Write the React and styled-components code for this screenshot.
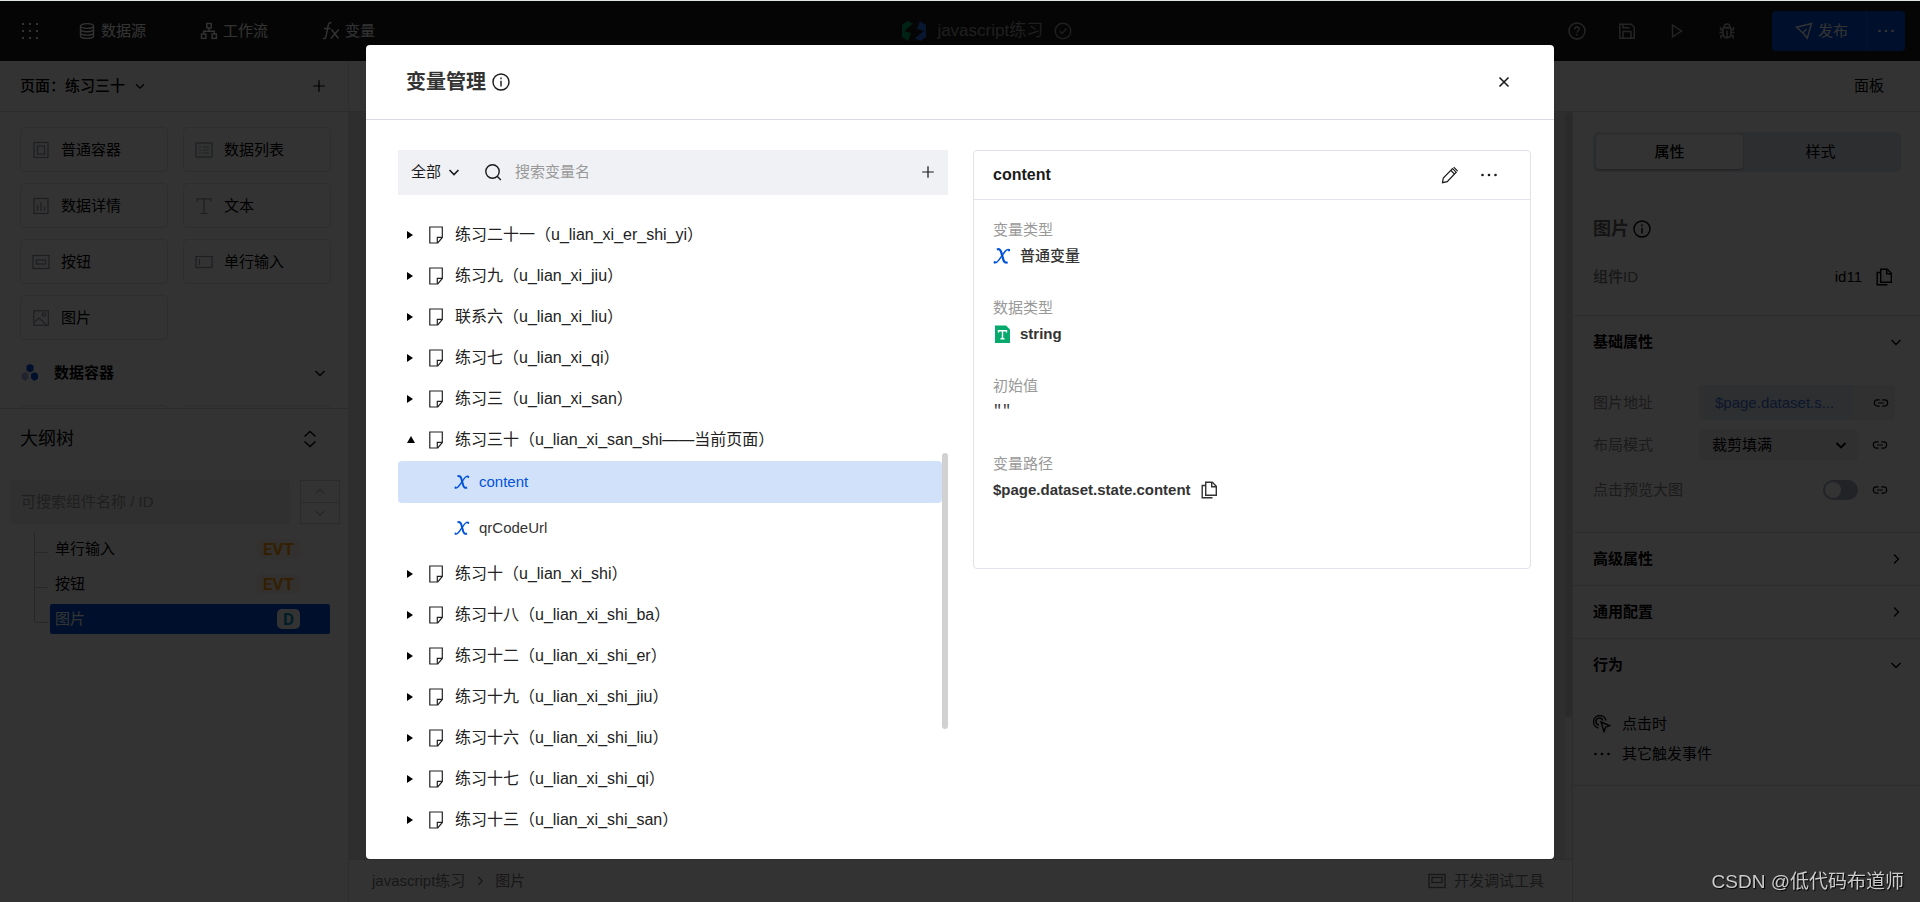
// ------------------------ React
import React, { useState } from 'react'


// ------------------------ Styled-Components
import styled, { createGlobalStyle, css } from 'styled-components';


const GlobalStyle = createGlobalStyle`
  * { box-sizing: border-box; }
  body {
    margin: 0;
    font-family: "Liberation Sans", "Noto Sans CJK SC", sans-serif;
    font-size: 15px;
    line-height: 22px;
    color: #000;
    overflow: hidden;
  }
  button, input, select {
    font: inherit;
    color: inherit;
    border: none;
    outline: none;
    background: none;
    padding: 0;
    margin: 0;
  }
  button { cursor: pointer; }
  ul { list-style: none; margin: 0; padding: 0; }
  h1, h2, h3, p, dl, dd { margin: 0; }
  a { color: inherit; text-decoration: none; }
`

// ------------------------ Icons
const Svg = styled.svg`
  display: block;
  flex: none;
  width: ${(props) => props.$size || 18}px;
  height: ${(props) => props.$size || 18}px;
  fill: none;
  stroke: currentColor;
  stroke-width: ${(props) => props.$line || 1.4};
`

const BlueSvg = styled(Svg)`
  color: #0052d9;
`

const ICONS = {
  grid: (
    <g fill="currentColor" stroke="none">
      {[2, 9, 16].map((y) => [2, 9, 16].map((x) => <rect key={x + '-' + y} x={x - 1} y={y - 1} width="2" height="2" />))}
    </g>
  ),
  database: <><ellipse cx="9" cy="4" rx="6.5" ry="2.4" /><path d="M2.5 4v10c0 1.4 2.900 2.400 6.500 2.400s6.500-1 6.500-2.400V4M2.500 7.300c0 1.400 2.900 2.400 6.500 2.400s6.500-1 6.500-2.400M2.500 10.700c0 1.400 2.900 2.400 6.500 2.400s6.500-1 6.500-2.400" /></>,
  flow: <><rect x="6.800" y="1.500" width="4.400" height="4.400" /><rect x="1.500" y="12" width="4.400" height="4.400" /><rect x="12" y="12" width="4.400" height="4.400" /><path d="M9 6v3.200M3.700 12V9.200h10.600V12" /></>,
  fx: <path d="M9.500 1.200C8 .200 6.700 .900 6.300 2.900L4 14.500c-.4 2-1.500 2.700-3 1.700M2 6.500h6.500M9.500 7.500l7 9M16.800 7.500L8.800 16.500" />,
  check: <><circle cx="9" cy="9" r="7.800" /><path d="M5.800 9.200l2.400 2.300 4.200-5" /></>,
  help: <><circle cx="9" cy="9" r="8" /><path d="M6.700 7.300c0-1.400 1-2.300 2.300-2.300s2.300.9 2.300 2.100c0 1.700-2.300 1.700-2.300 3.700M9 12v1.500" /></>,
  save: <><path d="M1.800 2.200h11.500l3 3v11H1.800z" /><path d="M5 2.200v3.600h6.500M5 16V9.500h8V16" /></>,
  play: <path d="M4.500 3l9 6-9 6z" />,
  bug: <><path d="M6 5.500C6 3.300 7.300 2 9 2s3 1.300 3 3.500zM5 6h8v5.500c0 2.600-1.700 4.300-4 4.300s-4-1.700-4-4.300zM9 8.500v7M5 8.500L2.500 7.500V5M13 8.500l2.500-1V5M5 10.500H1.500M13 10.500h3.500M5.300 13l-2.500 1v2.500M12.700 13l2.500 1v2.500" /></>,
  send: <><path d="M1.500 5.200L16.500 1.500 12.300 16.300 8 11z" /><path d="M8 11l3.500-4" /></>,
  more: <g fill="currentColor" stroke="none"><circle cx="2.500" cy="9" r="1.300" /><circle cx="9" cy="9" r="1.300" /><circle cx="15.500" cy="9" r="1.300" /></g>,
  down: <path d="M4.500 7l4.500 4.500L13.500 7" />,
  up: <path d="M4.500 11.500L9 7l4.500 4.500" />,
  right: <path d="M7 4.500L11.500 9 7 13.500" />,
  plus: <path d="M9 2.500v13M2.500 9h13" />,
  close: <path d="M4.500 4.500l9 9M13.500 4.500l-9 9" />,
  info: <><circle cx="9" cy="9" r="8" /><path d="M9 7.700v5.800M9 4.600v1.700" /></>,
  search: <><circle cx="8.500" cy="8.500" r="6.700" /><path d="M13.200 13.200l3.600 3.700" /></>,
  updown: <path d="M3.500 6.500L9 1.500l5.500 5M3.500 11.500L9 16.500l5.500-5" />,
  page: <><path d="M2.800 1h12.500v10.500l-4.500 5.500H2.800z" /><path d="M10.300 17V11.300h5" /></>,
  copy: <><path d="M5.700 1.200h6.600l4 4v9H5.700z" /><path d="M11.700 1.500v4.300H16M5.500 4.500H2.200V16.800H12.500" /></>,
  pencil: <><path d="M1.500 16.700l.8-4.700L11.500 2.500l3.700 3.700L6.200 15.600z" /><path d="M10 4.500l3.500 3.600M12.700 1.200l4 4" /></>,
  link: <path d="M7.500 5.500H4.700a3.200 3.500 0 0 0 0 7h2.800M10.500 5.500h2.800a3.200 3.500 0 0 1 0 7h-2.800M5.800 9h6.400" />,
  container: <><rect x="2" y="1.500" width="14" height="15" /><rect x="5.500" y="5" width="7" height="8" /></>,
  list: <><rect x="1" y="2" width="16" height="14" /><path d="M4 6h2M7.500 6H14M4 9h2M7.500 9H14M4 12h2M7.500 12H14" /></>,
  detail: <><rect x="2" y="1.500" width="14" height="15" /><path d="M5.500 8v6M9 5v9M12.500 10v4" /></>,
  text: <path d="M2 4.500V1.800h14v2.700M9 1.800v14.700M5.500 16.500h7" />,
  button: <><rect x="1" y="2.500" width="16" height="13" /><rect x="4.500" y="7" width="9" height="4" /></>,
  input: <><rect x="1" y="3.500" width="16" height="11" /><path d="M4.500 6v6" /></>,
  image: <><rect x="1.800" y="1.800" width="14.500" height="14.500" /><circle cx="12" cy="5.500" r="1.700" /><path d="M2 13.500l5-4.500 7.500 7" /></>,
  tool: <><rect x="1" y="2.500" width="16" height="13" /><rect x="4" y="5.500" width="10" height="5" /></>,
  click: <><path d="M8 7l8.500 3.700-3.800 1.500-1.700 4.300z" /><path d="M5.500 13A6.300 6.300 0 1 1 13 5.500M6 10A3.500 3.500 0 1 1 9.800 5.500" /></>,
}

function Icon({ name, size, line }) {
  return <Svg viewBox="0 0 18 18" $size={size} $line={line} aria-hidden="true">{ICONS[name]}</Svg>
}

function VarIcon({ size = 16 }) {
  return (
    <BlueSvg viewBox="0 0 16 16" $size={size} aria-hidden="true">
      <path d="M3.500 2.300c2-.9 3.200.2 3.800 2.300l1.800 6.400c.6 2.300 1.900 3.400 3.900 2.500" strokeWidth="2" />
      <path d="M14.900 2.800c-1.300-1.100-2.900-.5-4.400 1.400L5.300 11.500c-1.500 2.100-3 3.200-4.500 2.200" strokeWidth="1.300" />
      <circle cx="14.200" cy="2.900" r="1" fill="currentColor" stroke="none" />
      <circle cx="1.600" cy="13.500" r="1" fill="currentColor" stroke="none" />
    </BlueSvg>
  )
}

function StringIcon() {
  return (
    <Svg viewBox="0 0 18 18" $size={18} aria-hidden="true">
      <path d="M2 .5h11l4 4V18H2z" fill="#07aa6c" stroke="none" />
      <path d="M5.500 7.500V5.700h8v1.800M9.500 5.700v8M7.500 13.700h4" stroke="#fff" />
    </Svg>
  )
}

// ------------------------ Page frame
const Page = styled.div`
  display: flex;
  flex-direction: column;
  height: 100vh;
  border-top: 1px solid #dfe5e2;
  background-color: #fff;
`

const TopBar = styled.header`
  flex: none;
  display: grid;
  grid-template-columns: 47vw 1fr auto;
  align-items: center;
  height: 60px;
  padding-right: 15px;
  background-color: #1a1a1a;
  color: #fff;
`

const TopNav = styled.nav`
  display: flex;
  align-items: center;
  padding-left: 21px;
  a {
    display: flex;
    align-items: center;
    gap: 5px;
    margin-left: 54px;
  }
  a:first-of-type { margin-left: 39px; }
`

const AppTitle = styled.div`
  display: flex;
  align-items: center;
  gap: 11px;
  font-size: 17px;
  color: #999;
`

const TopActions = styled.div`
  display: flex;
  align-items: center;
  gap: 32px;
  color: #bbb;
`

const Publish = styled.div`
  display: flex;
  height: 40px;
  margin-left: 4px;
  border-radius: 4px;
  overflow: hidden;
  background-color: #0052d9;
  color: #fff;
  button {
    display: flex;
    align-items: center;
    gap: 5px;
    padding: 0 18px 0 23px;
  }
  button + button {
    padding: 0 10px;
    border-left: 1px solid #1a66e0;
  }
`

const SubBar = styled.div`
  flex: none;
  display: flex;
  height: 51px;
  border-bottom: 1px solid #dcdcdc;
`

const PageSwitch = styled.div`
  display: flex;
  align-items: center;
  justify-content: space-between;
  width: 349px;
  padding: 0 21px 0 20px;
  border-right: 1px solid #e6e6e6;
  font-weight: 500;
  button {
    display: flex;
    align-items: center;
    gap: 7px;
  }
`

const PanelLink = styled.a`
  margin: auto 36px auto auto;
`

const Body = styled.div`
  flex: 1;
  display: flex;
  min-height: 0;
`

// ------------------------ Left sidebar
const Sidebar = styled.aside`
  flex: none;
  width: 349px;
  border-right: 1px solid #e6e6e6;
`

const Components = styled.section`
  height: 296px;
  overflow: hidden;
  padding: 15px 17px 0 20px;
`

const CardGrid = styled.div`
  display: grid;
  grid-template-columns: 1fr 1fr;
  gap: 11px 15px;
`

const Card = styled.button`
  display: flex;
  align-items: center;
  gap: 11px;
  height: 45px;
  padding-left: 11px;
  border: 1px solid #e3e4e8;
  border-radius: 4px;
  svg { color: #8c95a5; }
`

const Category = styled.button`
  display: flex;
  align-items: center;
  width: 100%;
  height: 65px;
  padding-right: 2px;
  font-weight: 700;
  span {
    flex: 1;
    margin-left: 15px;
    text-align: left;
  }
`

const Outline = styled.section`
  border-top: 1px solid #d8d8d8;
`

const OutlineHead = styled.div`
  display: flex;
  align-items: center;
  justify-content: space-between;
  height: 60px;
  padding: 0 29px 0 20px;
  h2 {
    font-size: 18px;
    font-weight: 400;
  }
`

const OutlineSearch = styled.div`
  display: flex;
  gap: 10px;
  height: 44px;
  margin: 11px 8px 8px 10px;
  input {
    flex: 1;
    min-width: 0;
    padding: 0 11px;
    border-radius: 4px;
    background-color: #f0f0f0;
    &::placeholder { color: #999; }
  }
`

const Stepper = styled.div`
  display: flex;
  flex-direction: column;
  width: 40px;
  border: 1px solid #d5d5d5;
  color: #bbb;
  button {
    flex: 1;
    display: flex;
    align-items: center;
    justify-content: center;
  }
  button + button { border-top: 1px solid #d5d5d5; }
`

const TreeItem = styled.li`
  display: flex;
  height: 35px;
  padding: 0 18px 0 34px;
`

const Branch = styled.span`
  width: 14px;
  height: ${(props) => props.$last ? 20 : 35}px;
  margin-right: 2px;
  border-left: 1px solid #c8c8c8;
  &::before {
    content: '';
    display: block;
    height: 20px;
    border-bottom: 1px solid #c8c8c8;
  }
`

const TreeNode = styled.button`
  flex: 1;
  display: flex;
  align-items: center;
  justify-content: space-between;
  height: 30px;
  margin-top: 2px;
  padding: 0 30px 0 5px;
  border-radius: 2px;
  ${(props) => props.$active && css`
    background-color: #0052d9;
    color: #fff;
  `}
`

const Badge = styled.span`
  padding: 0 6px;
  border-radius: 5px;
  font-family: Roboto, sans-serif;
  font-size: 17px;
  line-height: 20px;
  font-weight: 700;
  background-color: ${(props) => props.$kind === 'D' ? '#fff' : '#fff4e8'};
  color: ${(props) => props.$kind === 'D' ? '#0594c0' : '#ffa011'};
`

// ------------------------ Center
const Center = styled.main`
  flex: 1;
  display: flex;
  flex-direction: column;
`

const Canvas = styled.div`
  flex: 1;
  display: flex;
  justify-content: flex-end;
  background-color: #e4e4e6;
`

const CanvasRail = styled.div`
  width: 7px;
  background-color: #f4f4f4;
  &::before {
    content: '';
    display: block;
    height: 81%;
    border-radius: 4px;
    background-color: #d0d0d0;
  }
`

const Footer = styled.footer`
  display: flex;
  align-items: center;
  justify-content: space-between;
  height: 43px;
  padding: 0 28px 0 23px;
  border-top: 1px solid #dcdcdc;
  color: #777;
  nav, button {
    display: flex;
    align-items: center;
    gap: 7px;
  }
  button { gap: 8px; }
`

// ------------------------ Right panel
const Panel = styled.aside`
  flex: none;
  width: 348px;
  border-left: 1px solid #dcdcdc;
`

const Tabs = styled.div`
  display: flex;
  height: 40px;
  margin: 20px 19px 39px 20px;
  padding: 3px;
  border-radius: 6px;
  background-color: #dce4ef;
`

const Tab = styled.button`
  flex: ${(props) => props.$active ? 147 : 155};
  border-radius: 4px;
  ${(props) => props.$active && css`
    background-color: #fff;
    box-shadow: 0 1px 2px rgba(0, 0, 0, 0.3);
    font-weight: 500;
  `}
`

const PanelTitle = styled.h2`
  display: flex;
  align-items: center;
  gap: 4px;
  height: 36px;
  margin: 0 20px 12px;
  font-size: 18px;
  font-weight: 700;
  span { color: #666; }
`

const IdRow = styled.div`
  display: flex;
  align-items: center;
  height: 36px;
  margin: 0 27px 20px 20px;
  span {
    flex: 1;
    font-weight: 500;
    color: #777;
  }
  button { margin-left: 13px; }
`

const Section = styled.section`
  padding: 0 25px ${(props) => props.$bottom || 0}px 20px;
  border-top: 1px solid #dcdcdc;
`

const SectionHead = styled.h3`
  display: flex;
  align-items: center;
  justify-content: space-between;
  height: 52px;
  margin-right: -10px;
  font-size: 15px;
  font-weight: 700;
`

const Prop = styled.div`
  display: grid;
  grid-template-columns: 106px minmax(0, 1fr);
  align-items: center;
  margin-top: ${(props) => props.$top}px;
  label { color: #888; }
`

const Control = styled.div`
  display: flex;
  align-items: center;
  justify-content: flex-end;
  height: 30px;
`

const Binding = styled(Control)`
  height: 35px;
  padding: 0 6px;
  border-radius: 4px;
  background-color: #f0f0f0;
  input {
    flex: 1;
    min-width: 0;
    align-self: stretch;
    padding: 0 10px;
    background-color: #e3e8f5;
    color: #3d73d9;
  }
  button { margin-left: 20px; }
`

const SelectBox = styled.div`
  flex: 1;
  display: flex;
  align-items: center;
  height: 30px;
  padding: 0 8px 0 13px;
  border-radius: 4px;
  background-color: #f0f0f0;
  select {
    flex: 1;
    appearance: none;
  }
`

const LinkButton = styled.button`
  padding: 0 7px 0 14px;
`

const Toggle = styled.input`
  appearance: none;
  display: flex;
  align-items: center;
  width: 35px;
  height: 20px;
  border-radius: 10px;
  background-color: #a5adbd;
  &::before {
    content: '';
    width: 16px;
    height: 16px;
    margin-left: 2px;
    border-radius: 50%;
    background-color: #fff;
  }
`

const EventRow = styled.button`
  display: flex;
  align-items: center;
  gap: 11px;
  height: 30px;
  white-space: nowrap;
`

// ------------------------ Dialog
const Overlay = styled.div`
  position: fixed;
  inset: 1px 0 0 0;
  display: flex;
  padding: 44px 19% 43px;
  justify-content: center;
  background-color: rgba(0, 0, 0, 0.8);
`

const Dialog = styled.section`
  display: flex;
  flex-direction: column;
  width: 100%;
  max-width: 1188px;
  border-radius: 4px;
  background-color: #fff;
  color: #1a1a1a;
`

const DialogHead = styled.header`
  display: flex;
  align-items: center;
  height: 75px;
  padding: 0 41px 0 40px;
  border-bottom: 1px solid #d7dae2;
  h1 {
    margin-right: 6px;
    font-size: 20px;
    line-height: 28px;
    font-weight: 700;
    color: #333;
  }
  button { margin-left: auto; }
`

const DialogBody = styled.div`
  flex: 1;
  min-height: 0;
  display: grid;
  grid-template-columns: 550fr 558fr;
  gap: 25px;
  align-items: start;
  padding: 30px 23px 0 32px;
`

const SearchBar = styled.div`
  display: flex;
  align-items: center;
  height: 45px;
  padding: 0 12px 2px 13px;
  background-color: #f0f1f5;
  select {
    appearance: none;
    margin-right: 3px;
  }
  input {
    flex: 1;
    min-width: 0;
    margin-left: 13px;
    &::placeholder { color: #999; }
  }
`

const FilterBox = styled.div`
  display: flex;
  align-items: center;
  margin-right: 21px;
`

const ListArea = styled.div`
  display: flex;
  margin-top: 19px;
`

const VarTree = styled.ul`
  flex: 1;
`

const PageRow = styled.button`
  display: flex;
  align-items: center;
  width: 100%;
  height: 41px;
  padding-left: 9px;
  font-size: 16px;
  color: #222;
  text-align: left;
  svg { margin-right: 10px; }
`

const Caret = styled.span`
  display: flex;
  width: 20px;
  &::before {
    content: '';
    border: 4px solid transparent;
    ${(props) => props.$open ? css`
      border-top: none;
      border-bottom: 7px solid #000;
    ` : css`
      border-right: none;
      border-left: 6px solid #000;
    `}
  }
`

const VarList = styled.div`
  padding-top: 1px;
`

const VarRow = styled.button`
  display: flex;
  align-items: center;
  gap: 9px;
  width: 100%;
  height: 42px;
  margin-bottom: 4px;
  padding-left: 56px;
  border-radius: 4px;
  background-color: ${(props) => props.$active ? '#d2e1fa' : 'transparent'};
  color: ${(props) => props.$active ? '#0052d9' : '#333'};
`

const ListRail = styled.div`
  width: 6px;
  padding-top: 239px;
  &::before {
    content: '';
    display: block;
    height: 276px;
    border-radius: 3px;
    background-color: #d1d1d1;
  }
`

const Detail = styled.article`
  border: 1px solid #e0e3ea;
  border-radius: 4px;
  header {
    display: flex;
    align-items: center;
    gap: 21px;
    height: 49px;
    padding: 0 32px 0 19px;
    border-bottom: 1px solid #e0e3ea;
  }
  h2 {
    flex: 1;
    font-size: 16px;
    font-weight: 700;
  }
  dl {
    height: 368px;
    padding: 19px;
  }
`

const Field = styled.div`
  margin-bottom: 26px;
  dt { color: #999; }
  dd {
    display: flex;
    align-items: center;
    gap: 9px;
    height: 30px;
    color: #333;
    font-weight: ${(props) => props.$weight || 700};
    font-family: ${(props) => props.$mono ? '"Liberation Mono", monospace' : 'inherit'};
  }
`

const Watermark = styled.p`
  position: fixed;
  right: 16px;
  bottom: 6px;
  font-size: 19px;
  line-height: 28px;
  color: #ccc;
  text-shadow: 1px 1px 1px #000;
`


const components = [
  { icon: 'container', name: '普通容器' },
  { icon: 'list', name: '数据列表' },
  { icon: 'detail', name: '数据详情' },
  { icon: 'text', name: '文本' },
  { icon: 'button', name: '按钮' },
  { icon: 'input', name: '单行输入' },
  { icon: 'image', name: '图片' },
]

const outline = [
  { name: '单行输入', badge: 'EVT' },
  { name: '按钮', badge: 'EVT' },
  { name: '图片', badge: 'D' },
]

const pages = [
  { title: '练习二十一（u_lian_xi_er_shi_yi）' },
  { title: '练习九（u_lian_xi_jiu）' },
  { title: '联系六（u_lian_xi_liu）' },
  { title: '练习七（u_lian_xi_qi）' },
  { title: '练习三（u_lian_xi_san）' },
  { title: '练习三十（u_lian_xi_san_shi——当前页面）', vars: ['content', 'qrCodeUrl'] },
  { title: '练习十（u_lian_xi_shi）' },
  { title: '练习十八（u_lian_xi_shi_ba）' },
  { title: '练习十二（u_lian_xi_shi_er）' },
  { title: '练习十九（u_lian_xi_shi_jiu）' },
  { title: '练习十六（u_lian_xi_shi_liu）' },
  { title: '练习十七（u_lian_xi_shi_qi）' },
  { title: '练习十三（u_lian_xi_shi_san）' },
]


function Header() {
  return (
    <TopBar>
      <TopNav>
        <button aria-label='菜单'><Icon name='grid' /></button>
        <a href='#data'><Icon name='database' />数据源</a>
        <a href='#flow'><Icon name='flow' />工作流</a>
        <a href='#vars'><Icon name='fx' />变量</a>
      </TopNav>
      <AppTitle>
        <svg width='24' height='20' viewBox='0 0 24 20' aria-hidden='true'>
          <path d='M0 4L5.500 0 11 2.500 2.500 10 9 12 6 20 0 16z' fill='#00a86b' />
          <path d='M24 16l-5.500 4-5.500-2.500L21.500 10 15 8l3-8 6 4z' fill='#2b6de8' />
          <path d='M2.500 10L11 7v5.500zM21.500 10L13 13V7.500z' fill='#1a1a1a' />
        </svg>
        <span>javascript练习</span>
        <Icon name='check' />
      </AppTitle>
      <TopActions>
        <button aria-label='帮助'><Icon name='help' /></button>
        <button aria-label='保存'><Icon name='save' /></button>
        <button aria-label='预览'><Icon name='play' /></button>
        <button aria-label='调试'><Icon name='bug' /></button>
        <Publish>
          <button><Icon name='send' />发布</button>
          <button aria-label='更多发布选项'><Icon name='more' /></button>
        </Publish>
      </TopActions>
    </TopBar>
  )
}

function LeftSide() {
  return (
    <Sidebar>
      <Components>
        <CardGrid>
          {
            components.map((item) => (
              <Card key={item.name}><Icon name={item.icon} line={1.2} />{item.name}</Card>
            ))
          }
        </CardGrid>
        <Category>
          <svg width='19' height='18' viewBox='0 0 19 18' aria-hidden='true'>
            <path d='M6.500 1.500L10 0l3.500 1.500v5L10 8.500 6.500 6.500z' fill='#0052d9' />
            <path d='M11 10l3.500-2L18 10v4.500L14.500 17 11 14.500z' fill='#0052d9' />
            <path d='M1.500 10L5 8l3.500 2v4.500L5 17l-3.500-2.500z' fill='#a6b4dc' />
          </svg>
          <span>数据容器</span>
          <Icon name='down' />
        </Category>
        <CardGrid>
          <Card aria-label='组件' />
          <Card aria-label='组件' />
        </CardGrid>
      </Components>
      <Outline>
        <OutlineHead>
          <h2>大纲树</h2>
          <button aria-label='展开或收起'><Icon name='updown' /></button>
        </OutlineHead>
        <OutlineSearch>
          <input aria-label='搜索组件' placeholder='可搜索组件名称 / ID' />
          <Stepper>
            <button aria-label='上一个'><Icon name='up' size={16} /></button>
            <button aria-label='下一个'><Icon name='down' size={16} /></button>
          </Stepper>
        </OutlineSearch>
        <ul>
          {
            outline.map((item, i) => (
              <TreeItem key={item.name}>
                <Branch $last={i === outline.length - 1} />
                <TreeNode $active={i === 2}>
                  {item.name}
                  <Badge $kind={item.badge}>{item.badge}</Badge>
                </TreeNode>
              </TreeItem>
            ))
          }
        </ul>
      </Outline>
    </Sidebar>
  )
}

function RightSide() {
  return (
    <Panel>
      <Tabs>
        <Tab $active>属性</Tab>
        <Tab>样式</Tab>
      </Tabs>
      <PanelTitle><span>图片</span><Icon name='info' /></PanelTitle>
      <IdRow>
        <span>组件ID</span>
        id11
        <button aria-label='复制ID'><Icon name='copy' /></button>
      </IdRow>

      <Section $bottom={27}>
        <SectionHead>基础属性<Icon name='down' /></SectionHead>
        <Prop $top={17}>
          <label htmlFor='src'>图片地址</label>
          <Binding>
            <input id='src' readOnly value='$page.dataset.s...' />
            <button aria-label='绑定图片地址'><Icon name='link' size={16} /></button>
          </Binding>
        </Prop>
        <Prop $top={10}>
          <label htmlFor='mode'>布局模式</label>
          <Control>
            <SelectBox>
              <select id='mode'><option>裁剪填满</option></select>
              <Icon name='down' line={1.8} />
            </SelectBox>
            <LinkButton aria-label='绑定布局模式'><Icon name='link' size={16} /></LinkButton>
          </Control>
        </Prop>
        <Prop $top={15}>
          <label htmlFor='preview'>点击预览大图</label>
          <Control>
            <Toggle id='preview' type='checkbox' />
            <LinkButton aria-label='绑定预览'><Icon name='link' size={16} /></LinkButton>
          </Control>
        </Prop>
      </Section>
      <Section>
        <SectionHead>高级属性<Icon name='right' /></SectionHead>
      </Section>
      <Section>
        <SectionHead>通用配置<Icon name='right' /></SectionHead>
      </Section>
      <Section $bottom={16}>
        <SectionHead>行为<Icon name='down' /></SectionHead>
        <Prop $top={18}>
          <EventRow><Icon name='click' />点击时</EventRow>
        </Prop>
        <EventRow><Icon name='more' />其它触发事件</EventRow>
      </Section>
      <Section as='div' />
    </Panel>
  )
}

function VariableDialog() {

  const [selected, setSelected] = useState('content')

  return (
    <Overlay>
      <Dialog role='dialog' aria-labelledby='dialog-title'>
        <DialogHead>
          <h1 id='dialog-title'>变量管理</h1>
          <Icon name='info' />
          <button aria-label='关闭'><Icon name='close' line={1.6} /></button>
        </DialogHead>
        <DialogBody>
          <div>
            <SearchBar>
              <FilterBox>
                <select aria-label='变量范围'><option>全部</option></select>
                <Icon name='down' line={1.6} />
              </FilterBox>
              <Icon name='search' />
              <input aria-label='搜索变量名' placeholder='搜索变量名' />
              <button aria-label='新建变量'><Icon name='plus' size={16} /></button>
            </SearchBar>
            <ListArea>
              <VarTree>
                {
                  pages.map((page) => (
                    <li key={page.title}>
                      <PageRow aria-expanded={Boolean(page.vars)}>
                        <Caret $open={Boolean(page.vars)} />
                        <Icon name='page' size={18} line={1.2} />
                        {page.title}
                      </PageRow>
                      {page.vars &&
                        <VarList>
                          {page.vars.map((name) => (
                            <VarRow key={name} $active={selected === name} onClick={() => setSelected(name)}>
                              <VarIcon />{name}
                            </VarRow>
                          ))}
                        </VarList>
                      }
                    </li>
                  ))
                }
              </VarTree>
              <ListRail />
            </ListArea>
          </div>
          <Detail>
            <header>
              <h2>{selected}</h2>
              <button aria-label='编辑'><Icon name='pencil' line={1.2} /></button>
              <button aria-label='更多'><Icon name='more' /></button>
            </header>
            <dl>
              <Field $weight={500}>
                <dt>变量类型</dt>
                <dd><VarIcon size={18} />普通变量</dd>
              </Field>
              <Field>
                <dt>数据类型</dt>
                <dd><StringIcon />string</dd>
              </Field>
              <Field $weight={400} $mono>
                <dt>初始值</dt>
                <dd>""</dd>
              </Field>
              <Field>
                <dt>变量路径</dt>
                <dd>
                  $page.dataset.state.{selected}
                  <button aria-label='复制路径'><Icon name='copy' /></button>
                </dd>
              </Field>
            </dl>
          </Detail>
        </DialogBody>
      </Dialog>
    </Overlay>
  )
}


export default function App() {
  return (
    <>
      <GlobalStyle />
      <Page>
        <Header />
        <SubBar>
          <PageSwitch>
            <button>页面：练习三十<Icon name='down' size={16} /></button>
            <button aria-label='新建页面'><Icon name='plus' size={16} /></button>
          </PageSwitch>
          <PanelLink href='#panel'>面板</PanelLink>
        </SubBar>
        <Body>
          <LeftSide />
          <Center>
            <Canvas><CanvasRail /></Canvas>
            <Footer>
              <nav>
                <a href='#app'>javascript练习</a>
                <Icon name='right' size={16} />
                <a href='#image'>图片</a>
              </nav>
              <button><Icon name='tool' />开发调试工具</button>
            </Footer>
          </Center>
          <RightSide />
        </Body>
      </Page>
      <VariableDialog />
      <Watermark>CSDN @低代码布道师</Watermark>
    </>
  )
}
